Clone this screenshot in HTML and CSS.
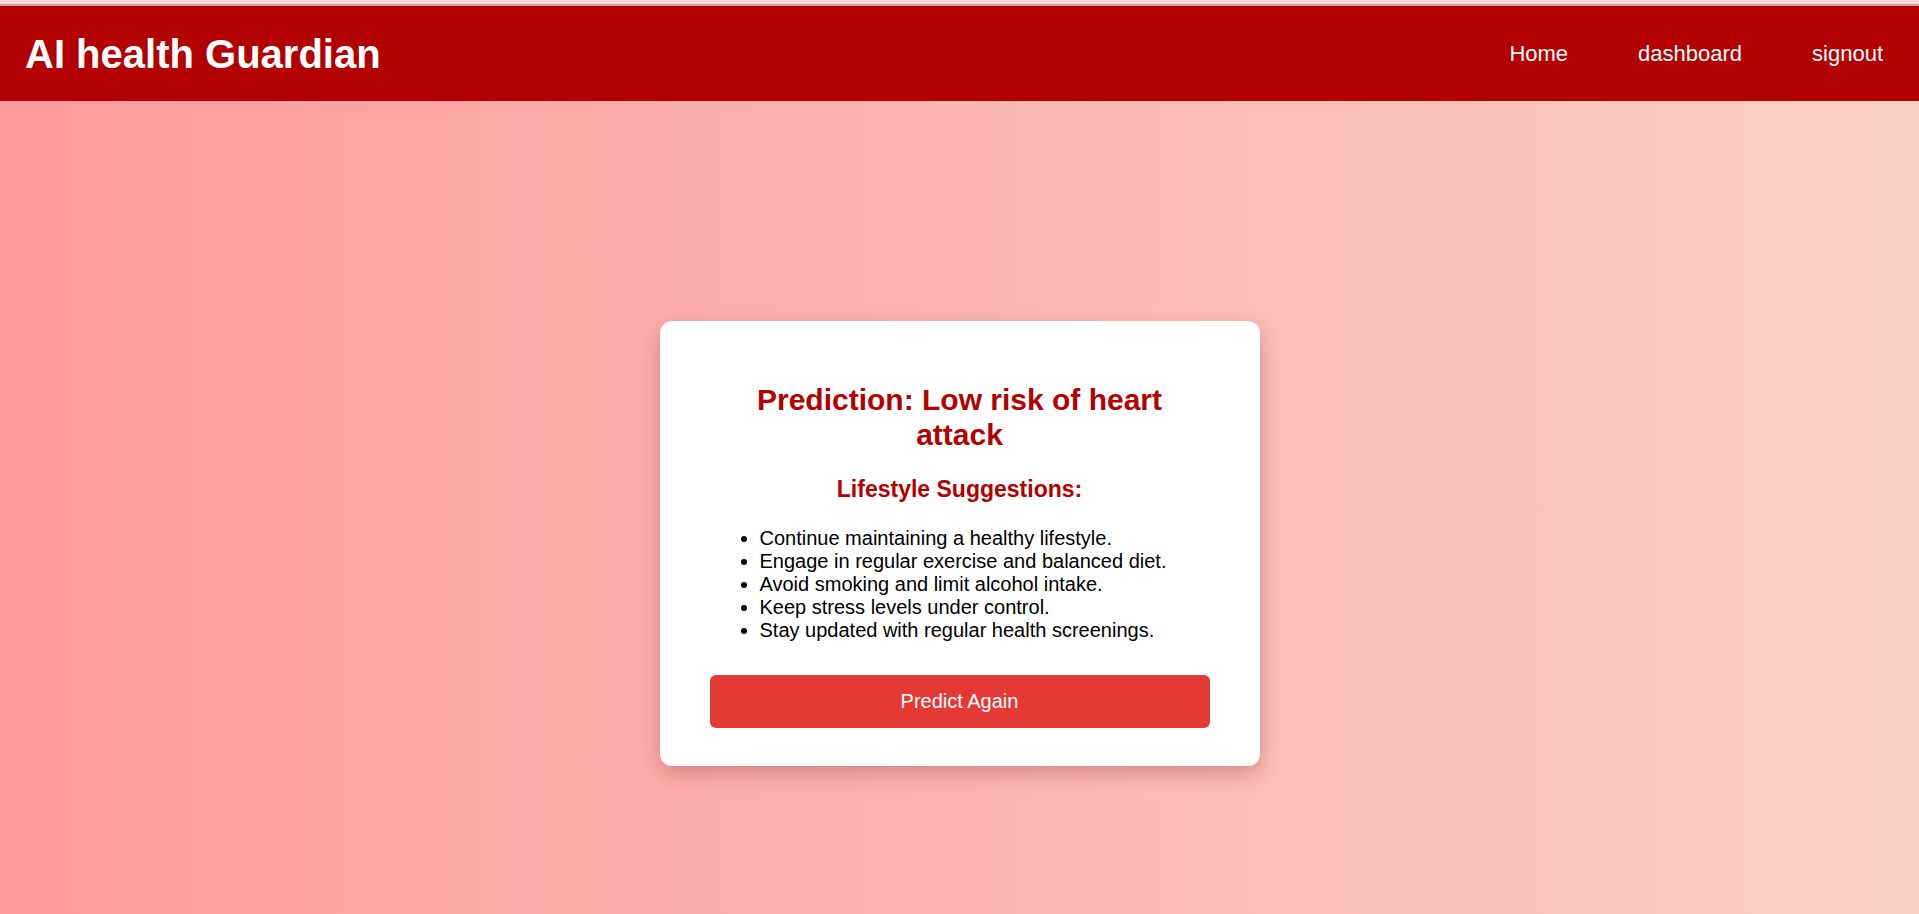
FILE: index.html
```html
<!DOCTYPE html>
<html lang="en">
<head>
<meta charset="utf-8">
<title>AI health Guardian</title>
<link rel="stylesheet" href="styles.css">
</head>
<body>
<div class="topstrip"></div>
<header class="navbar">
  <h1 class="brand">AI health Guardian</h1>
  <nav class="nav">
    <a href="#">Home</a>
    <a href="#">dashboard</a>
    <a href="#">signout</a>
  </nav>
</header>
<main class="page">
  <section class="card">
    <h2 class="result">Prediction: Low risk of heart attack</h2>
    <h3 class="subtitle">Lifestyle Suggestions:</h3>
    <ul class="tips">
      <li>Continue maintaining a healthy lifestyle.</li>
      <li>Engage in regular exercise and balanced diet.</li>
      <li>Avoid smoking and limit alcohol intake.</li>
      <li>Keep stress levels under control.</li>
      <li>Stay updated with regular health screenings.</li>
    </ul>
    <button class="again" type="button">Predict Again</button>
  </section>
</main>
</body>
</html>
```
FILE: styles.css
```css
* { box-sizing: border-box; }
html, body { margin: 0; padding: 0; }
body {
  font-family: "Liberation Sans", Arial, sans-serif;
  min-height: 100vh;
  background: linear-gradient(90deg, #ff9a9e 0%, #fad0c4 100%);
}
.topstrip {
  height: 6px;
  background: #fdd6db;
  border-bottom: 2px solid #bfa9aa;
}
.navbar {
  height: 95px;
  background: #b30000;
  display: flex;
  align-items: center;
  justify-content: space-between;
  padding: 0 36px 0 25px;
}
.brand {
  margin: 0;
  color: #fff;
  font-size: 40px;
  font-weight: bold;
  line-height: 1;
}
.nav {
  display: flex;
  gap: 70px;
}
.nav a {
  color: #fff;
  text-decoration: none;
  font-size: 22px;
}
.page {
  padding-top: 220px;
  padding-bottom: 40px;
}
.card {
  width: 600px;
  margin: 0 auto;
  background: #fff;
  border-radius: 12px;
  padding: 40px 50px 38px;
  box-shadow: 0 8px 20px rgba(120, 30, 30, 0.28);
}
.result {
  margin: 22px 0 0;
  padding: 0 6px;
  font-size: 30px;
  line-height: 1.15;
  font-weight: bold;
  color: #b30000;
  text-align: center;
}
.subtitle {
  margin: 24px 0 0;
  font-size: 23px;
  line-height: 1.15;
  font-weight: bold;
  color: #b30000;
  text-align: center;
}
.tips {
  margin: 25px 0 0;
  padding-left: 50px;
  font-size: 20px;
  line-height: 23px;
  color: #000;
}
.again {
  display: block;
  width: 100%;
  height: 53px;
  margin-top: 33px;
  border: none;
  border-radius: 6px;
  background: #e53935;
  color: #fff;
  font-family: "Liberation Sans", Arial, sans-serif;
  font-size: 20px;
  cursor: pointer;
}
```
